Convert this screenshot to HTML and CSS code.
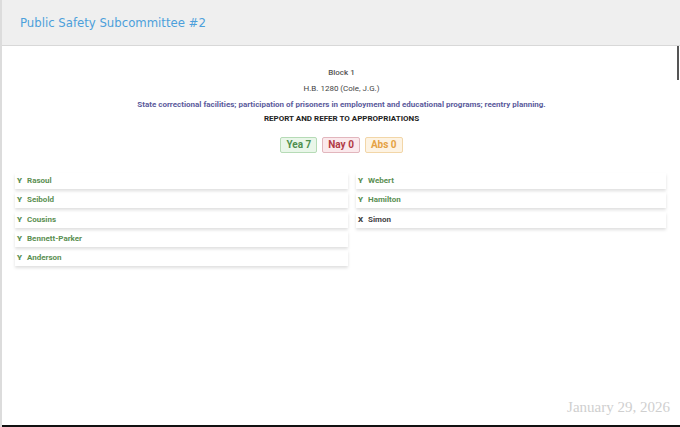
FILE: index.html
```html
<!DOCTYPE html>
<html lang="en">
<head>
    <meta charset="UTF-8">
    <meta name="viewport" content="width=device-width, initial-scale=1.0">
    <title>Public Safety Subcommittee #2</title>
    <link rel="stylesheet" href="styles.css">
</head>
<body>
    <header class="topbar">
        <h1>Public Safety Subcommittee #2</h1>
    </header>
    <main class="panel">
        <section class="bill">
            <p class="block">Block 1</p>
            <p class="bill-no">H.B. 1280 (Cole, J.G.)</p>
            <p class="desc">State correctional facilities; participation of prisoners in employment and educational programs; reentry planning.</p>
            <p class="action">REPORT AND REFER TO APPROPRIATIONS</p>
            <div class="tally">
                <span class="badge yea">Yea 7</span>
                <span class="badge nay">Nay 0</span>
                <span class="badge abs">Abs 0</span>
            </div>
        </section>
        <section class="votes">
            <ul class="col">
                <li class="vote y"><b>Y</b>Rasoul</li>
                <li class="vote y"><b>Y</b>Seibold</li>
                <li class="vote y"><b>Y</b>Cousins</li>
                <li class="vote y"><b>Y</b>Bennett-Parker</li>
                <li class="vote y"><b>Y</b>Anderson</li>
            </ul>
            <ul class="col">
                <li class="vote y"><b>Y</b>Webert</li>
                <li class="vote y"><b>Y</b>Hamilton</li>
                <li class="vote x"><b>X</b>Simon</li>
            </ul>
        </section>
        <div class="date">January 29, 2026</div>
    </main>
</body>
</html>
```

FILE: styles.css
```css
html, body {
    height: 100%;
}

body {
    margin: 0;
    font-family: Roboto, Arial, sans-serif;
    background-color: white;
    border-left: 2px solid #dcdcdc;
    box-sizing: border-box;
    display: flex;
    flex-direction: column;
}

.topbar {
    height: 45px;
    flex-shrink: 0;
    background-color: #efefef;
    border-bottom: 1px solid #d8d8d8;
    display: flex;
    align-items: center;
    padding-left: 18px;
}

.topbar h1 {
    margin: 0;
    font-family: "DejaVu Sans Condensed", "DejaVu Sans", sans-serif;
    font-stretch: condensed;
    font-weight: normal;
    font-size: 13px;
    color: #4c9fdb;
}

.panel {
    flex: 1;
    position: relative;
    border-bottom: 2px solid #111;
    padding: 19px 12px 0 13px;
}

/* fake scrollbar thumb */
.panel::after {
    content: "";
    position: absolute;
    top: 0;
    right: 1px;
    width: 2px;
    height: 34px;
    background-color: #555;
}

.bill {
    text-align: center;
}

.bill p {
    margin: 0;
    font-size: 8px;
    line-height: 16px;
}

.block {
    font-weight: 500;
    color: #555;
}

.bill-no {
    color: #444;
}

.desc {
    font-weight: bold;
    color: #5b5b9c;
}

.bill p.action {
    font-weight: bold;
    color: #222;
    line-height: 12px;
}

.tally {
    display: flex;
    justify-content: center;
    gap: 5px;
    margin-top: 12px;
}

.badge {
    font-size: 10px;
    font-weight: bold;
    padding: 1px 5px;
    line-height: 12px;
    border: 1px solid;
    border-radius: 2px;
}

.yea {
    color: #4e8f4e;
    background-color: #e9f6e9;
    border-color: #b6dbb6;
}

.nay {
    color: #b23b45;
    background-color: #fbe9ec;
    border-color: #e2b6bd;
}

.abs {
    color: #e5a243;
    background-color: #fdf3e3;
    border-color: #f2d6a8;
}

.votes {
    display: grid;
    grid-template-columns: 333px 310px;
    gap: 8px;
    margin-top: 20px;
}

.col {
    list-style-type: none;
    margin: 0;
    padding: 0;
    display: flex;
    flex-direction: column;
    gap: 3.25px;
}

.vote {
    height: 16px;
    line-height: 16px;
    padding-left: 2px;
    font-size: 8px;
    font-weight: bold;
    box-shadow: 0 2px 3px rgba(0, 0, 0, 0.13);
}

.vote b {
    display: inline-block;
    width: 10px;
}

.vote.y {
    color: #5b8f52;
}

.vote.x {
    color: #444;
}

.date {
    position: absolute;
    right: 10px;
    bottom: 9px;
    font-family: "Liberation Serif", serif;
    font-size: 15px;
    color: #cfcfcf;
}
```
